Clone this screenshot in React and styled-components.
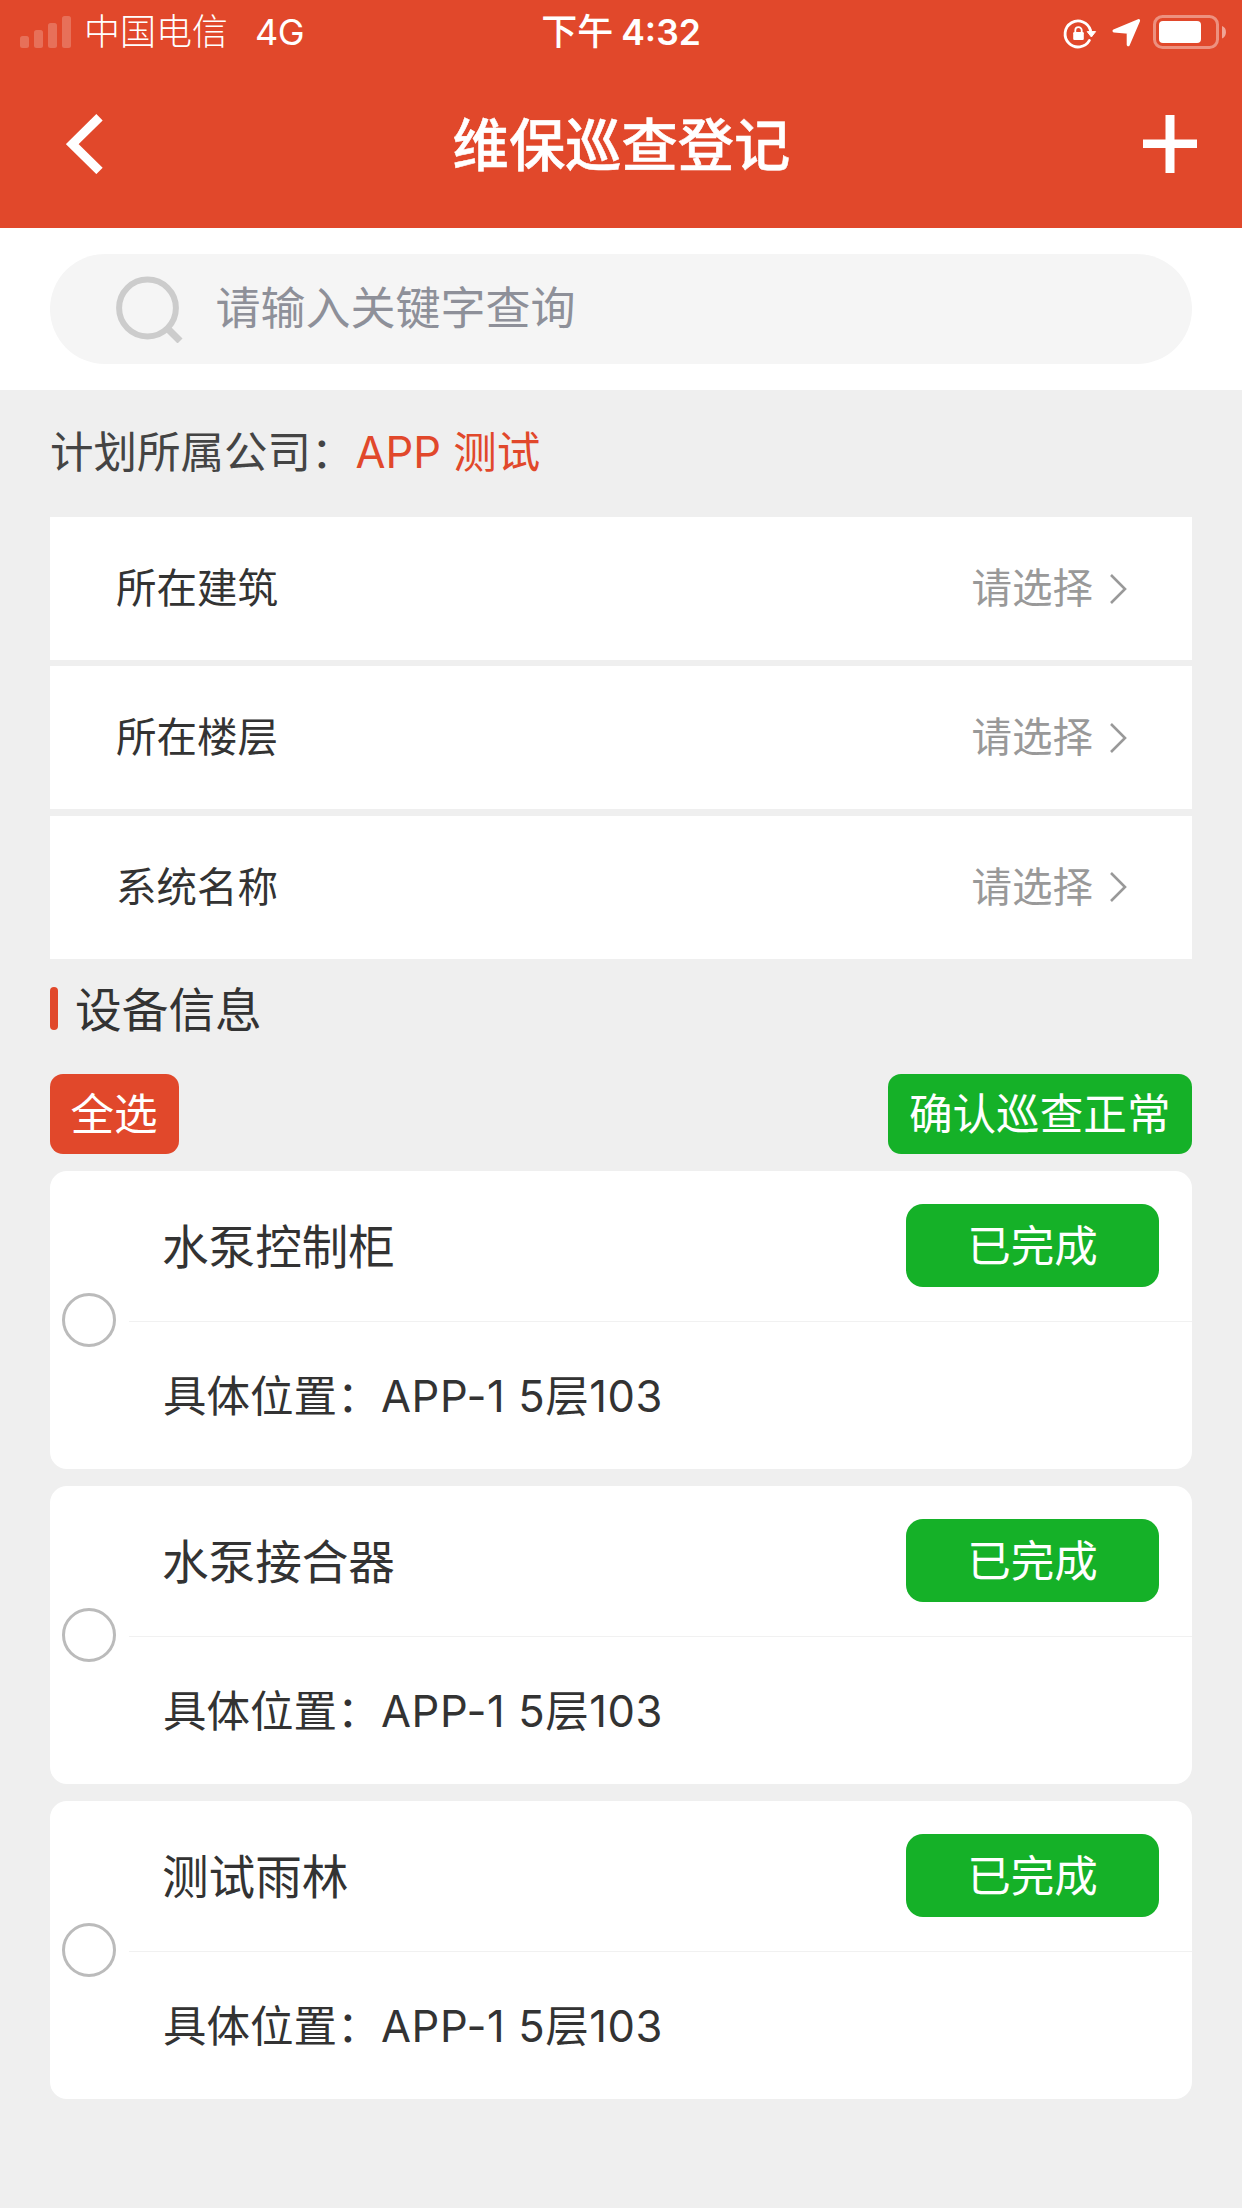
import React from 'react'
import styled, { createGlobalStyle } from 'styled-components'
import { useState } from 'react';

const filters = ['所在建筑', '所在楼层', '系统名称'];

const devices = [
    { id: 1, name: '水泵控制柜', place: '5层103' },
    { id: 2, name: '水泵接合器', place: '5层103' },
    { id: 3, name: '测试雨林', place: '5层103' },
];

function StatusIcons() {
    return (
        <StatusSvg width="190" height="40" viewBox="0 0 190 40">
            {/* rotation lock */}
            <path d="M37.4 28.400A13 13 0 1 1 38.600 18.500" fill="none" stroke="#fff" strokeWidth="2.8" strokeLinecap="round" />
            <path d="M35.2 19.600h8.400l-4.200 5.400z" fill="#fff" stroke="#fff" strokeWidth="1" strokeLinejoin="round" />
            <rect x="21.200" y="20" width="10.600" height="8" rx="1.200" fill="#fff" />
            <path d="M23.300 20.500v-2.200a3.200 3.200 0 0 1 6.400 0V20.500" fill="none" stroke="#fff" strokeWidth="1.800" />
            {/* location arrow */}
            <path d="M62 19L86.600 8.600L76.200 32.800V20.300z" fill="#fff" stroke="#fff" strokeWidth="3" strokeLinejoin="round" />
            {/* battery */}
            <rect x="102.500" y="4.500" width="63" height="31" rx="8" fill="none" stroke="#fff" strokeOpacity=".4" strokeWidth="3" />
            <rect x="107" y="9" width="42" height="22" rx="4" fill="#fff" />
            <path d="M170 14c5.300 1.500 5.300 10.600 0 12.400z" fill="#fff" fillOpacity=".5" />
        </StatusSvg>
    )
}

function App() {
    const [checked, checkedChange] = useState([]);
    const toggle = (id) => checkedChange(
        checked.includes(id) ? checked.filter(c => c !== id) : [...checked, id]
    );
    return (
        <>
            <GlobalStyle />
            <Page>
                <Header>
                    <StatusBar>
                        <Carrier>
                            <svg width="51" height="32" viewBox="0 0 51 32" fill="#fff" fillOpacity=".22">
                                <rect x="0" y="20" width="9" height="12" rx="2.500" />
                                <rect x="14" y="14" width="9" height="18" rx="2.500" />
                                <rect x="28" y="7" width="9" height="25" rx="2.500" />
                                <rect x="42" y="0" width="9" height="32" rx="2.500" />
                            </svg>
                            <span>中国电信</span>
                            <Network>4G</Network>
                        </Carrier>
                        <Clock>下午<b>4:32</b></Clock>
                        <StatusIcons />
                    </StatusBar>
                    <NavBar>
                        <svg width="37" height="60" viewBox="0 0 37 60">
                            <path d="M33.500 3.300L6.300 30.100L33.500 56.900" fill="none" stroke="#fff" strokeWidth="9" />
                        </svg>
                        <Title>维保巡查登记</Title>
                        <svg width="54" height="58" viewBox="0 0 54 58" fill="#fff">
                            <rect x="22.500" y="0" width="9" height="58" />
                            <rect x="0" y="24.500" width="54" height="8.500" />
                        </svg>
                    </NavBar>
                </Header>
                <SearchArea>
                    <SearchBox>
                        <svg width="68" height="68" viewBox="0 0 68 68" fill="none" stroke="#cccccc" strokeWidth="6">
                            <circle cx="31.500" cy="33" r="28.400" />
                            <path d="M51 53l13 13" strokeWidth="7" />
                        </svg>
                        <span>请输入关键字查询</span>
                    </SearchBox>
                </SearchArea>
                <Company>
                    计划所属公司：<em>APP 测试</em>
                </Company>
                <Filters>
                    {filters.map(name => (
                        <FilterRow key={name}>
                            <span>{name}</span>
                            <Choose>
                                <span>请选择</span>
                                <svg width="18" height="32" viewBox="0 0 18 32">
                                    <path d="M2 2l14 14L2 30" fill="none" stroke="#999" strokeWidth="2.600" />
                                </svg>
                            </Choose>
                        </FilterRow>
                    ))}
                </Filters>
                <SectionTitle><span>设备信息</span></SectionTitle>
                <Actions>
                    <ActionButton color="#e1482b" onClick={() => checkedChange(devices.map(d => d.id))}>全选</ActionButton>
                    <ActionButton color="#15b128">确认巡查正常</ActionButton>
                </Actions>
                <DeviceList>
                    {devices.map(d => (
                        <Card key={d.id}>
                            <Radio $on={checked.includes(d.id)} onClick={() => toggle(d.id)} />
                            <CardBody>
                                <CardTop>
                                    <DeviceName>{d.name}</DeviceName>
                                    <Badge>已完成</Badge>
                                </CardTop>
                                <Place>具体位置：<span>APP-1 {d.place}</span></Place>
                            </CardBody>
                        </Card>
                    ))}
                </DeviceList>
            </Page>
        </>
    )
}

export default App

const GlobalStyle = createGlobalStyle`
*{
    box-sizing:border-box;
}
body{
    margin:0;
    background:#efefef;
}
`;

const Page = styled.div`
width:1242px;
height:2208px;
overflow:hidden;
background:#efefef;
color:#333;
font-family:Inter, "Noto Sans CJK SC", sans-serif;
font-size:43.5px;
line-height:1.4;
white-space:nowrap;
svg{
    display:block;
    flex:none;
}
`;

const Header = styled.div`
height:228px;
background:#e1482b;
color:#fff;
`;

const StatusBar = styled.div`
display:grid;
grid-template-columns:1fr auto 1fr;
align-items:center;
height:60px;
font-size:36px;
line-height:62px;
`;

const Carrier = styled.div`
display:flex;
align-items:center;
padding-left:20px;
font-weight:300;
svg{
    margin-right:13px;
}
`;

const Network = styled.span`
margin-left:27px;
font-weight:400;
letter-spacing:-.5px;
`;

const Clock = styled.div`
padding-top:1px;
font-weight:500;
b{
    margin-left:8px;
    font-size:35.5px;
    font-weight:600;
}
`;

const StatusSvg = styled.svg`
justify-self:end;
`;

const NavBar = styled.div`
display:flex;
align-items:center;
justify-content:space-between;
height:168px;
padding:0 45px 0 66px;
`;

const Title = styled.h1`
margin:0 3px 0 0;
padding-top:4px;
font-size:56.3px;
font-weight:500;
line-height:80px;
-webkit-text-stroke:.5px #fff;
`;

const SearchArea = styled.div`
height:162px;
padding:26px 50px;
background:#fff;
`;

const SearchBox = styled.div`
display:flex;
align-items:center;
height:110px;
padding-left:66px;
border-radius:55px;
background:#f5f5f5;
color:#8e9099;
font-size:45px;
span{
    margin:0 0 2px 31.5px;
}
`;

const Company = styled.div`
height:127px;
padding-left:50px;
line-height:125px;
color:#444;
em{
    margin-left:1px;
    font-style:normal;
    color:#e1482b;
}
`;

const Filters = styled.div`
display:grid;
gap:6.3px;
margin:0 50px;
`;

const FilterRow = styled.div`
display:flex;
align-items:center;
justify-content:space-between;
height:143px;
padding:0 65px 0 66px;
background:#fff;
font-size:40.5px;
span{
    padding-top:2px;
}
`;

const Choose = styled.div`
display:flex;
align-items:center;
gap:16px;
color:#999;
`;

const SectionTitle = styled.h2`
display:flex;
align-items:center;
height:100px;
margin:0 50px;
font-size:46.7px;
font-weight:400;
&::before{
    content:"";
    width:8px;
    height:43px;
    margin-right:17px;
    border-radius:4px;
    background:#e1482b;
}
span{
    padding-top:5px;
}
`;

const Actions = styled.div`
display:flex;
justify-content:space-between;
margin:15.5px 50px 0;
`;

const ActionButton = styled.button`
height:80px;
padding:0 21.500px 0 20.500px;
border:0;
border-radius:13px;
background:${props => props.color};
color:#fff;
font:inherit;
font-size:43.6px;
line-height:79px;
`;

const DeviceList = styled.div`
display:grid;
gap:16.5px;
margin:16.5px 50px 0;
`;

const Card = styled.div`
display:flex;
align-items:center;
height:298.5px;
padding-left:12px;
border-radius:17px;
background:#fff;
`;

const Radio = styled.button`
flex:none;
width:54px;
height:54px;
padding:0;
border:3px solid #bbb;
border-radius:50%;
background:${props => props.$on ? '#e1482b' : '#fff'};
`;

const CardBody = styled.div`
flex:1;
margin-left:13px;
`;

const CardTop = styled.div`
display:flex;
align-items:center;
justify-content:space-between;
height:151px;
padding:0 33px 0 33px;
border-bottom:1.5px solid #f1f1f1;
`;

const DeviceName = styled.div`
padding-top:4px;
font-size:46.6px;
`;

const Badge = styled.div`
width:253px;
height:83px;
border-radius:17px;
background:#15b128;
color:#fff;
text-align:center;
line-height:84px;
`;

const Place = styled.div`
height:147px;
padding-left:34px;
line-height:148px;
span{
    margin-left:.5px;
    letter-spacing:.6px;
}
`;
